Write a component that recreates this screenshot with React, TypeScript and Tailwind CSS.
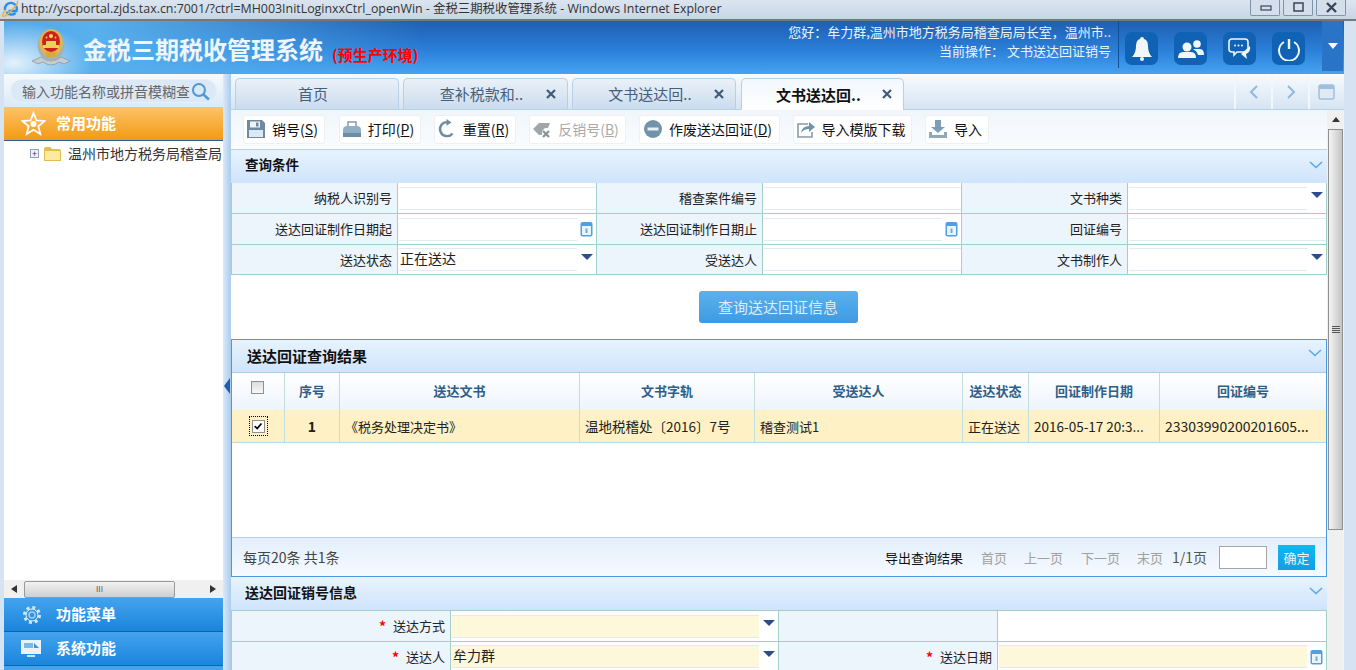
import type { ReactNode } from "react";

const Save = () => (
  <svg width="20" height="20" viewBox="0 0 20 20">
    <path d="M1 1h15l3 3v15H1z" fill="#6f8a9e" />
    <rect x="4" y="2.500" width="10" height="6" fill="#eef3f6" />
    <rect x="10" y="3.500" width="2.500" height="4" fill="#6f8a9e" />
    <rect x="3" y="11" width="14" height="7" fill="#dbe9f5" />
  </svg>
);
const Printer = () => (
  <svg width="20" height="20" viewBox="0 0 20 20">
    <path d="M6 7V3h8v4" fill="none" stroke="#8a9aa5" strokeWidth="1.500" />
    <path d="M1 11q0-4 4-4h10q4 0 4 4v7H1z" fill="#8fb0c4" />
    <rect x="1" y="14" width="18" height="4" fill="#6a8ea6" />
  </svg>
);
const Reset = () => (
  <svg width="20" height="20" viewBox="0 0 20 20" fill="none">
    <path d="M15.500 14.500A7 7 0 1 1 11 3.200" stroke="#6b8ca3" strokeWidth="2.400" />
    <path d="M9.500 0l5 3.400-5 3.400z" fill="#6b8ca3" />
  </svg>
);
const Unregister = () => (
  <svg width="20" height="20" viewBox="0 0 20 20">
    <path d="M1 10l6-6h11l-2 5h-3l-3 3v4H7z" fill="#a0a6aa" />
    <path d="M11 12l6 6M17 12l-6 6" stroke="#8d9499" strokeWidth="2.400" />
  </svg>
);
const Cancel = () => (
  <svg width="20" height="20" viewBox="0 0 20 20">
    <circle cx="10" cy="10" r="9" fill="#6f93ab" />
    <rect x="4.500" y="8.500" width="11" height="3" fill="#e8eef2" />
  </svg>
);
const ShareOut = () => (
  <svg width="20" height="20" viewBox="0 0 20 20" fill="none">
    <path d="M12 5H2v13h14v-5" stroke="#8a9ba7" strokeWidth="1.600" />
    <path d="M5 14q1-7 8-7V3l6 5-6 5V10q-5 0-8 4z" fill="#6e94ad" />
  </svg>
);
const Download = () => (
  <svg width="20" height="20" viewBox="0 0 20 20">
    <path d="M7 1h6v7h4l-7 6-7-6h4z" fill="#7c9fb6" />
    <path d="M1 13h3v3h12v-3h3v6H1z" fill="#8ea9ba" />
  </svg>
);

const Calendar = () => (
  <svg width="13" height="16" viewBox="0 0 13 16" className="shrink-0">
    <rect x="0.500" y="1" width="12" height="14.500" rx="2" fill="#4f9fe6" />
    <rect x="2" y="5" width="9" height="9" fill="#eaf4fc" />
    <rect x="5.500" y="7.500" width="2" height="4.500" fill="#7fa8c8" />
  </svg>
);
const DropArrow = () => (
  <svg width="12" height="6" viewBox="0 0 12 6" className="shrink-0">
    <path d="M0 0h12L6 6z" fill="#2b4d8c" />
  </svg>
);
const CloseX = () => (
  <svg width="10" height="10" viewBox="0 0 10 10" fill="none">
    <path d="M1 1l8 8M9 1l-8 8" stroke="#3f5a78" strokeWidth="2.200" />
  </svg>
);

const Emblem = () => (
  <svg width="38" height="40" viewBox="0 0 38 40">
    <path d="M0 33l9-4q5 4 10 4t10-4l9 4-6 3-5-2q-4 3-8 3t-8-3l-5 2z" fill="#c4ccd0" stroke="#7f8c94" strokeWidth="0.600" />
    <ellipse cx="19" cy="17" rx="13.500" ry="16" fill="#a9b0ae" />
    <ellipse cx="19" cy="15" rx="11.500" ry="13.500" fill="#e0b84a" />
    <ellipse cx="19" cy="13.500" rx="9" ry="10.500" fill="#d0201c" />
    <path d="M11 17h16v3H11zM14 13h10v4H14z" fill="#f0cf5c" />
    <circle cx="19" cy="8" r="2" fill="#f6dc6a" />
    <circle cx="14.500" cy="9.500" r="0.900" fill="#f6dc6a" />
    <circle cx="23.500" cy="9.500" r="0.900" fill="#f6dc6a" />
    <path d="M13 24h12l-2 5h-8z" fill="#d9a93a" />
  </svg>
);

const HeaderIcon = ({ children }: { children: ReactNode }) => (
  <div className="flex h-[33px] w-[33px] items-center justify-center rounded-[7px] bg-[#0f62b4]">{children}</div>
);

const toolbar = [
  { icon: <Save />, text: "销号(", key: "S", width: "w-[82px]", gap: "mr-[14px]" },
  { icon: <Printer />, text: "打印(", key: "P", width: "w-[82px]", gap: "mr-[13px]" },
  { icon: <Reset />, text: "重置(", key: "R", width: "w-[82px]", gap: "mr-[13px]" },
  { icon: <Unregister />, text: "反销号(", key: "B", width: "w-[97px]", gap: "mr-[13px]", disabled: true },
  { icon: <Cancel />, text: "作废送达回证(", key: "D", width: "w-[141px]", gap: "mr-[13px]" },
  { icon: <ShareOut />, text: "导入模版下载", width: "w-[119px]", gap: "mr-[13px]" },
  { icon: <Download />, text: "导入", width: "w-[64px]", gap: "" },
];

const tabs = [
  { text: "首页", width: "w-[164px]", gap: "mr-[4px]" },
  { text: "查补税款和..", width: "w-[165px]", gap: "mr-[4px]", close: true },
  { text: "文书送达回..", width: "w-[164px]", gap: "mr-[5px]", close: true },
  { text: "文书送达回..", width: "w-[163px]", gap: "", close: true, active: true },
];

const Field = ({ kind, value, required }: { kind?: "date" | "select"; value?: string; required?: boolean }) => (
  <div className="flex h-full items-center pl-[1px]">
    <div
      className={`flex h-[23px] flex-1 items-center border-y border-[#e2ebf3] pb-[3px] pl-[1px] text-[14px] text-[#222] ${
        required ? "bg-[#fdf8da]" : "bg-white"
      }`}
    >
      {value}
    </div>
    {kind === "date" && (
      <div className="flex w-[19px] justify-end pr-[3px]">
        <Calendar />
      </div>
    )}
    {kind === "select" && (
      <div className="flex w-[19px] justify-end pb-[6px] pr-[3px]">
        <DropArrow />
      </div>
    )}
  </div>
);

const Label = ({ text, required }: { text: string; required?: boolean }) => (
  <div className="flex h-full items-center justify-end gap-[7px] bg-[#ecf4fc] pr-[5px] text-[13px] text-[#222]">
    {required && <span className="text-[14px] font-bold leading-none text-[#f00]">*</span>}
    {text}
  </div>
);

const queryRows: { label: string; kind?: "date" | "select"; value?: string }[][] = [
  [{ label: "纳税人识别号" }, { label: "稽查案件编号" }, { label: "文书种类", kind: "select" }],
  [{ label: "送达回证制作日期起", kind: "date" }, { label: "送达回证制作日期止", kind: "date" }, { label: "回证编号" }],
  [{ label: "送达状态", kind: "select", value: "正在送达" }, { label: "受送达人" }, { label: "文书制作人", kind: "select" }],
];

const gridCols = "grid-cols-[53px_55px_240px_175px_208px_66px_131px_1fr]";
const gridHead = ["序号", "送达文书", "文书字轨", "受送达人", "送达状态", "回证制作日期", "回证编号"];
const gridRow = [
  { text: "《税务处理决定书》", size: "text-[13px]" },
  { text: "温地税稽处〔2016〕7号", size: "text-[13.500px]" },
  { text: "稽查测试1", size: "text-[13px]" },
  { text: "正在送达", size: "text-[13px]" },
  { text: "2016-05-17 20:3...", size: "text-[13.500px]" },
  { text: "23303990200201605...", size: "text-[14px]" },
];

const SectionHead = ({
  title,
  className,
  titleClass,
  chevronClass,
}: {
  title: string;
  className?: string;
  titleClass?: string;
  chevronClass?: string;
}) => (
  <div className={`flex items-center justify-between bg-[linear-gradient(#e8f3fe,#cfe4fb)] pr-[4px] font-bold text-[#111] ${className}`}>
    <span className={titleClass}>{title}</span>
    <svg width="14" height="8" viewBox="0 0 14 8" fill="none" className={chevronClass}>
      <path d="M1 1l6 5.500L13 1" stroke="#5aa9ec" strokeWidth="1.600" />
    </svg>
  </div>
);

const NavItem = ({ icon, text }: { icon: ReactNode; text: string }) => (
  <div className="flex h-[34px] items-center border-b border-[#1c5f9c] bg-[linear-gradient(#44a3ee,#1a85dc)] pl-[17px] text-[15px] font-bold text-white">
    <div className="flex w-[35px] justify-start">{icon}</div>
    {text}
  </div>
);

const App = () => (
  <div className="flex h-[670px] w-[1356px] flex-col overflow-hidden bg-[#d6e3f2] font-['Noto_Sans_CJK_SC',sans-serif]">
    {/* ie title bar */}
    <div className="flex h-[21px] shrink-0 items-start justify-between border-b-2 border-[#74797f] bg-[linear-gradient(#dbe5f0,#c8d6e4)] pr-[10px]">
      <div className="flex items-center">
        <svg width="18" height="18" viewBox="0 0 18 18" fill="none" className="ml-[2px] mr-[1px]">
          <path d="M3 10a6 6 0 1 1 11.500 1H6.500M13.500 13a6 6 0 0 1-9-1" stroke="#2e8fe0" strokeWidth="2.400" />
          <path d="M15 1c2 1-1 5-6 10s-7 6-8 5 1-4 3-6" stroke="#e8b13a" strokeWidth="1.400" />
        </svg>
        <span className="font-['Open_Sans','Noto_Sans_CJK_SC',sans-serif] text-[12.400px] leading-[18px] text-[#333]">
          http://yscportal.zjds.tax.cn:7001/?ctrl=MH003InitLoginxxCtrl_openWin - 金税三期税收管理系统 - Windows Internet Explorer
        </span>
      </div>
      <div className="flex gap-[3px]">
        {[
          <rect key="min" x="10" y="6" width="10" height="4" fill="none" stroke="#38465a" strokeWidth="1.200" />,
          <rect key="max" x="10" y="3" width="9" height="8" fill="none" stroke="#38465a" strokeWidth="1.500" />,
          <path key="close" d="M10 3l9 9M19 3l-9 9" stroke="#38465a" strokeWidth="2.400" />,
        ].map((glyph) => (
          <div key={glyph.key} className="h-[16px] w-[30px] rounded-b-[2px] border border-t-0 border-[#7f93aa] bg-[#d4dfeb]">
            <svg width="30" height="15" viewBox="0 0 30 15">{glyph}</svg>
          </div>
        ))}
      </div>
    </div>

    <div className="flex min-h-0 flex-1 pl-[4px]">
      <div className="flex w-[1340px] shrink-0 flex-col">
        {/* blue header */}
        <div className="relative flex h-[53px] shrink-0 items-start bg-[linear-gradient(#1e5fb3,#2b7fd8_55%,#46a2f2)]">
          <div className="absolute inset-y-0 left-0 w-[420px] bg-[linear-gradient(90deg,#4fa8ea,#58b0ec_22%,rgba(60,140,225,0))]" />
          <div className="absolute inset-y-0 left-0 w-[90px] bg-[radial-gradient(ellipse_at_10px_42px,rgba(255,255,255,0.85),rgba(255,255,255,0)_70%)]" />
          <div className="relative ml-[28px] mt-[7px]">
            <Emblem />
          </div>
          <div className="relative ml-[13px] mt-[11px] text-[24px] font-bold leading-[34px] text-[#eef6fc]">金税三期税收管理系统</div>
          <div className="relative ml-[9px] mt-[23px] text-[15px] font-bold leading-[22px] text-[#f00]">(预生产环境)</div>
          <div className="relative ml-auto mr-[7px] mt-[1px] flex flex-col items-end text-[13px] leading-[19px] text-[#eaf4fd]">
            <span>您好：牟力群,温州市地方税务局稽查局局长室，温州市..</span>
            <span>当前操作： 文书送达回证销号</span>
          </div>
          <div className="relative h-[47px] w-[1px] bg-[#0f4f95]" />
          <div className="relative ml-[6px] mt-[11px] flex gap-[16px]">
            <HeaderIcon>
              <svg width="20" height="24" viewBox="0 0 20 24">
                <path d="M10 0q2 0 2 2 4 1 4 7 0 7 4 11H0q4-4 4-11 0-6 4-7 0-2 2-2z" fill="#f2f7fb" />
                <circle cx="10" cy="22" r="2" fill="#f2f7fb" />
              </svg>
            </HeaderIcon>
            <HeaderIcon>
              <svg width="26" height="20" viewBox="0 0 26 20" fill="#f2f7fb">
                <circle cx="9" cy="8" r="4.500" />
                <path d="M0 19q0-6 5-6h8q5 0 5 6z" />
                <circle cx="19" cy="5" r="3.800" />
                <path d="M15 10h7q4 0 4 6h-6q-1-4-5-6z" />
              </svg>
            </HeaderIcon>
            <HeaderIcon>
              <svg width="24" height="24" viewBox="0 0 24 24" fill="none">
                <path d="M4 2h13q3 0 3 3v7q0 3-3 3H9l-3 3v-3H4q-3 0-3-3V5q0-3 3-3z" stroke="#f2f7fb" strokeWidth="1.600" />
                <circle cx="7" cy="8.500" r="1" fill="#f2f7fb" />
                <circle cx="10.500" cy="8.500" r="1" fill="#f2f7fb" />
                <circle cx="14" cy="8.500" r="1" fill="#f2f7fb" />
                <path d="M22 9q1 6-4 8l1 5-6-5z" fill="#f2f7fb" />
              </svg>
            </HeaderIcon>
            <HeaderIcon>
              <svg width="24" height="24" viewBox="0 0 24 24" fill="none">
                <path d="M7 5a10 10 0 1 0 10 0" stroke="#f2f7fb" strokeWidth="2" />
                <path d="M12 2v10" stroke="#f2f7fb" strokeWidth="2.400" />
              </svg>
            </HeaderIcon>
          </div>
          <div className="relative ml-[17px] mr-[1px] flex h-[50px] w-[21px] items-center justify-center bg-[#2a74c8]">
            <svg width="10" height="6" viewBox="0 0 10 6">
              <path d="M0 0h10L5 6z" fill="#fff" />
            </svg>
          </div>
        </div>

        <div className="flex min-h-0 flex-1">
          {/* sidebar */}
          <div className="flex w-[219px] shrink-0 flex-col bg-white">
            <div className="flex h-[33px] shrink-0 items-start bg-[linear-gradient(#f6fafe,#dce9f6)] pl-[6px] pt-[5px]">
              <div className="flex h-[24px] w-[207px] items-center rounded-full border border-[#e8f0f8] bg-[#dbe8f6] pl-[11px] pr-[6px]">
                <span className="w-[168px] overflow-hidden whitespace-nowrap text-[14px] text-[#666]">输入功能名称或拼音模糊查</span>
                <svg width="19" height="19" viewBox="0 0 19 19" fill="none" className="ml-[2px]">
                  <circle cx="8" cy="8" r="6" stroke="#4f97d8" strokeWidth="2" />
                  <path d="M12.500 12.500L18 17.500" stroke="#4f97d8" strokeWidth="2.600" />
                </svg>
              </div>
            </div>
            <div className="flex h-[34px] shrink-0 items-center border-b border-[#2a5f9a] bg-[linear-gradient(#fec268,#f39a12)] pl-[17px] text-[15px] font-bold text-white">
              <svg width="25" height="25" viewBox="0 0 25 25" className="mr-[10px]">
                <path d="M12.500 2l3 7.500 8 .6-6.200 5.100 2 7.800-6.800-4.300-6.800 4.300 2-7.800L1.500 10.100l8-.6z" fill="none" stroke="#fff" strokeWidth="1.800" />
                <circle cx="12.500" cy="13" r="3" fill="#fff" />
              </svg>
              常用功能
            </div>
            <div className="flex h-[24px] shrink-0 items-center overflow-hidden whitespace-nowrap pl-[26px] pt-[1px] text-[14px] text-[#333]">
              <div className="mr-[5px] flex h-[9px] w-[9px] shrink-0 items-center justify-center border border-[#8fa1b3] bg-[#eef1f5] text-[9px] leading-none text-[#223a7a]">
                +
              </div>
              <svg width="17" height="14" viewBox="0 0 17 14" className="mr-[7px] shrink-0">
                <path d="M0 2q0-2 2-2h4l2 2h7q2 0 2 2v10H0z" fill="#e3bd4e" />
                <rect x="1" y="4" width="15" height="9" fill="#fbeaa0" />
              </svg>
              温州市地方税务局稽查局
            </div>
            <div className="flex-1" />
            <div className="flex h-[18px] shrink-0 items-center bg-[#f0f0f0] pl-[7px] pr-[5px]">
              <svg width="6" height="8" viewBox="0 0 6 8">
                <path d="M6 0v8L0 4z" fill="#333" />
              </svg>
              <div className="mx-[7px] flex h-[17px] w-[151px] items-center justify-center rounded-[2px] border border-[#999] bg-[linear-gradient(#f2f2f2,#cfcfcf)] text-[8px] leading-none text-[#555]">
                III
              </div>
              <div className="flex-1" />
              <svg width="6" height="8" viewBox="0 0 6 8" className="mr-[2px]">
                <path d="M0 0v8l6-4z" fill="#333" />
              </svg>
            </div>
            <NavItem
              text="功能菜单"
              icon={
                <svg width="22" height="22" viewBox="0 0 22 22" fill="none">
                  <circle cx="11" cy="11" r="7.500" stroke="#cfe8fb" strokeWidth="3" strokeDasharray="3 2.900" />
                  <circle cx="11" cy="11" r="6" stroke="#e6f3fc" strokeWidth="1" />
                  <circle cx="11" cy="11" r="3" stroke="#9fd0f5" strokeWidth="1.500" />
                </svg>
              }
            />
            <NavItem
              text="系统功能"
              icon={
                <svg width="20" height="18" viewBox="0 0 20 18">
                  <rect x="0" y="0" width="20" height="14" fill="#e8f4fd" />
                  <rect x="3" y="3" width="9" height="5" fill="#7db9e8" />
                  <path d="M13 3l5 5h-5z" fill="#4d8fc4" />
                  <rect x="6" y="15" width="8" height="2" fill="#cfe6f8" />
                </svg>
              }
            />
            <div className="h-[4px] shrink-0 bg-[#44a3ee]" />
          </div>

          {/* drag strip */}
          <div className="relative w-[8px] shrink-0 bg-[linear-gradient(90deg,#dce9f7,#a9ccee)]">
            <svg width="6" height="16" viewBox="0 0 6 16" className="absolute left-[1px] top-[304px]">
              <path d="M6 0v16L0 8z" fill="#1e5fa8" />
            </svg>
          </div>

          {/* main */}
          <div className="flex min-w-0 flex-1 flex-col">
            <div className="flex h-[36px] shrink-0 items-end border-b border-[#b2d2ef] bg-[linear-gradient(#f7fbfe,#d6e4f2)] pl-[4px]">
              {tabs.map((tab, i) => (
                <div
                  key={i}
                  className={`relative flex items-center justify-center rounded-t-[5px] border border-b-0 border-[#b8cfe6] pr-[8px] pt-[1px] text-[15px] ${tab.width} ${tab.gap} ${
                    tab.active
                      ? "-mb-px h-[32px] bg-[linear-gradient(#f2f8fe,#fff)] font-bold text-[#111]"
                      : "h-[31px] bg-[linear-gradient(#eaf1f8,#cbdcee)] text-[#46607c]"
                  }`}
                >
                  {tab.text}
                  {tab.close && (
                    <span className="absolute right-[11px] top-[10px]">
                      <CloseX />
                    </span>
                  )}
                </div>
              ))}
              <div className="flex-1" />
              {[
                <path key="l" d="M8 1L2 7l6 6" stroke="#90b8dc" strokeWidth="2" fill="none" />,
                <path key="r" d="M2 1l6 6-6 6" stroke="#90b8dc" strokeWidth="2" fill="none" />,
              ].map((p) => (
                <div key={p.key} className="flex h-[35px] w-[37px] items-center justify-center border-l-2 border-[#f2f7fb]">
                  <svg width="10" height="14" viewBox="0 0 10 14">{p}</svg>
                </div>
              ))}
              <div className="flex h-[35px] w-[36px] items-center justify-center border-l-2 border-[#f2f7fb] pr-[1px]">
                <svg width="17" height="16" viewBox="0 0 17 16">
                  <rect x="1" y="1" width="15" height="14" rx="2" fill="#dfeaf5" stroke="#9dc0e0" strokeWidth="1.500" />
                  <rect x="1" y="1" width="15" height="4" fill="#9dc0e0" />
                </svg>
              </div>
            </div>

            <div className="flex min-h-0 flex-1">
              <div className="flex w-[1096px] shrink-0 flex-col overflow-hidden">
                <div className="flex h-[40px] shrink-0 items-start border-b border-[#b2d2ef] bg-[linear-gradient(#f1f6fb,#fafcfe)] pl-[12px] pt-[5px]">
                  {toolbar.map((btn, i) => (
                    <div
                      key={i}
                      className={`flex h-[29px] items-center justify-center gap-[6px] rounded-[3px] border border-[#eef1f4] bg-white pb-[1px] pr-[4px] text-[14px] ${btn.width} ${btn.gap} ${
                        btn.disabled ? "text-[#a9a9a9]" : "text-[#111]"
                      }`}
                    >
                      {btn.icon}
                      <span className="whitespace-nowrap">
                        {btn.text}
                        {btn.key && (
                          <>
                            <span className="underline">{btn.key}</span>)
                          </>
                        )}
                      </span>
                    </div>
                  ))}
                </div>
                <SectionHead title="查询条件" className="h-[33px] shrink-0 pl-[14px] text-[13.500px]" titleClass="-mt-[5px]" chevronClass="-mt-[3px]" />
                <div className="grid shrink-0 grid-cols-[166px_199px_166px_199px_166px_1fr] grid-rows-[30px_31px_30px] border-x border-b border-[#a3cfc9] bg-white">
                  {queryRows.flatMap((row, r) =>
                    row.flatMap((cell, c) => [
                      <div key={`l${r}${c}`} className={`border-r border-[#a3cfc9] ${r ? "border-t" : ""}`}>
                        <Label text={cell.label} />
                      </div>,
                      <div key={`f${r}${c}`} className={`${c < 2 ? "border-r border-[#a3cfc9]" : ""} ${r ? "border-t border-[#a3cfc9]" : ""}`}>
                        <Field kind={cell.kind} value={cell.value} />
                      </div>,
                    ])
                  )}
                </div>
                <div className="flex h-[64px] shrink-0 items-start justify-center bg-white pr-[2px] pt-[16px]">
                  <div className="flex h-[32px] w-[159px] items-center justify-center rounded-[3px] bg-[linear-gradient(#5cb1ec,#3f9ae3)] text-[15px] text-[#dcecf9]">
                    查询送达回证信息
                  </div>
                </div>

                {/* result grid */}
                <div className="flex h-[238px] shrink-0 flex-col border border-[#4a9ade] bg-white">
                  <SectionHead title="送达回证查询结果" className="h-[33px] shrink-0 border-b border-[#a6cdea] pl-[15px] text-[15px]" titleClass="mt-[1px]" chevronClass="-mt-[7px]" />
                  <div className={`grid h-[37px] shrink-0 ${gridCols} bg-[linear-gradient(#fff,#eef4fb)] text-[13px] font-bold text-[#2f5f88]`}>
                    <div className="flex items-start justify-center border-r border-[#c3dcdc] pr-[1px] pt-[8px]">
                      <div className="h-[13px] w-[13px] border border-[#909090] bg-[linear-gradient(#ddd,#f8f8f8)]" />
                    </div>
                    {gridHead.map((h, i) => (
                      <div key={i} className="flex items-center justify-center border-r border-[#c3dcdc] pb-[2px] last:border-r-0">
                        {h}
                      </div>
                    ))}
                  </div>
                  <div className={`grid h-[33px] shrink-0 ${gridCols} border-b border-[#b8d8e4] bg-[#fdf1c5] text-[#222]`}>
                    <div className="flex items-center justify-center border-r border-[#c3dcdc]">
                      <div className="flex h-[20px] w-[19px] items-center justify-center border border-dotted border-black">
                        <svg width="13" height="13" viewBox="0 0 13 13" className="border border-[#909090] bg-white">
                          <path d="M2 6l3 3 5-6" fill="none" stroke="#000" strokeWidth="2" />
                        </svg>
                      </div>
                    </div>
                    <div className="flex items-center justify-center border-r border-[#c3dcdc] text-[14px] font-bold">1</div>
                    {gridRow.map((v, i) => (
                      <div key={i} className={`flex items-center overflow-hidden whitespace-nowrap border-r border-[#c3dcdc] pl-[5px] pt-[1px] last:border-r-0 ${v.size}`}>
                        {v.text}
                      </div>
                    ))}
                  </div>
                  <div className="flex-1" />
                  <div className="flex h-[39px] shrink-0 items-center border-t border-[#b8d0e6] bg-[linear-gradient(#e3effb,#f6faff)] pl-[11px] pr-[11px] pt-[1px] text-[13px] text-[#a0a0a0]">
                    <span className="text-[14px] text-[#444]">每页20条 共1条</span>
                    <span className="ml-auto text-[#111]">导出查询结果</span>
                    <span className="ml-[18px]">首页</span>
                    <span className="ml-[17px]">上一页</span>
                    <span className="ml-[18px]">下一页</span>
                    <span className="ml-[17px]">末页</span>
                    <span className="ml-[9px] text-[14px] text-[#555]">1/1页</span>
                    <div className="ml-[12px] h-[23px] w-[48px] border border-[#a5a5a5] bg-white" />
                    <div className="ml-[11px] flex h-[25px] w-[37px] items-center justify-center bg-[linear-gradient(#13b8ef,#0f9fe6)] text-[13px] text-[#e8f6fd]">
                      确定
                    </div>
                  </div>
                </div>

                <SectionHead title="送达回证销号信息" className="h-[33px] shrink-0 pl-[14px] text-[14px]" titleClass="-mt-[3px]" chevronClass="-mt-[5px]" />
                <div className="grid shrink-0 grid-cols-[219px_328px_219px_1fr] grid-rows-[30px_30px] border-x border-t border-[#a3cfc9] bg-white">
                  <div className="border-r border-[#a3cfc9]">
                    <Label text="送达方式" required />
                  </div>
                  <div className="border-r border-[#a3cfc9]">
                    <Field kind="select" required />
                  </div>
                  <div className="border-r border-[#a3cfc9] bg-[#ecf4fc]" />
                  <div />
                  <div className="border-r border-t border-[#a3cfc9]">
                    <Label text="送达人" required />
                  </div>
                  <div className="border-r border-t border-[#a3cfc9]">
                    <Field kind="select" value="牟力群" required />
                  </div>
                  <div className="border-r border-t border-[#a3cfc9]">
                    <Label text="送达日期" required />
                  </div>
                  <div className="border-t border-[#a3cfc9]">
                    <Field kind="date" required />
                  </div>
                </div>
              </div>

              {/* page scrollbar */}
              <div className="flex w-[16px] shrink-0 flex-col items-stretch bg-[#f0f0f0] pl-[1px]">
                <div className="flex h-[19px] items-center justify-center">
                  <svg width="8" height="5" viewBox="0 0 8 5">
                    <path d="M0 5h8L4 0z" fill="#333" />
                  </svg>
                </div>
                <div className="flex h-[401px] flex-col justify-center border border-[#8f8f8f] bg-[linear-gradient(90deg,#f4f4f4,#dcdcdc_50%,#c4c4c4)]">
                  <div className="mx-auto h-[7px] w-[8px] bg-[repeating-linear-gradient(#555_0,#555_1px,#ddd_1px,#ddd_2px)]" />
                </div>
              </div>
              <div className="flex-1 bg-[#eef4fa]" />
            </div>
          </div>
        </div>
      </div>
    </div>
  </div>
);

export default App;
